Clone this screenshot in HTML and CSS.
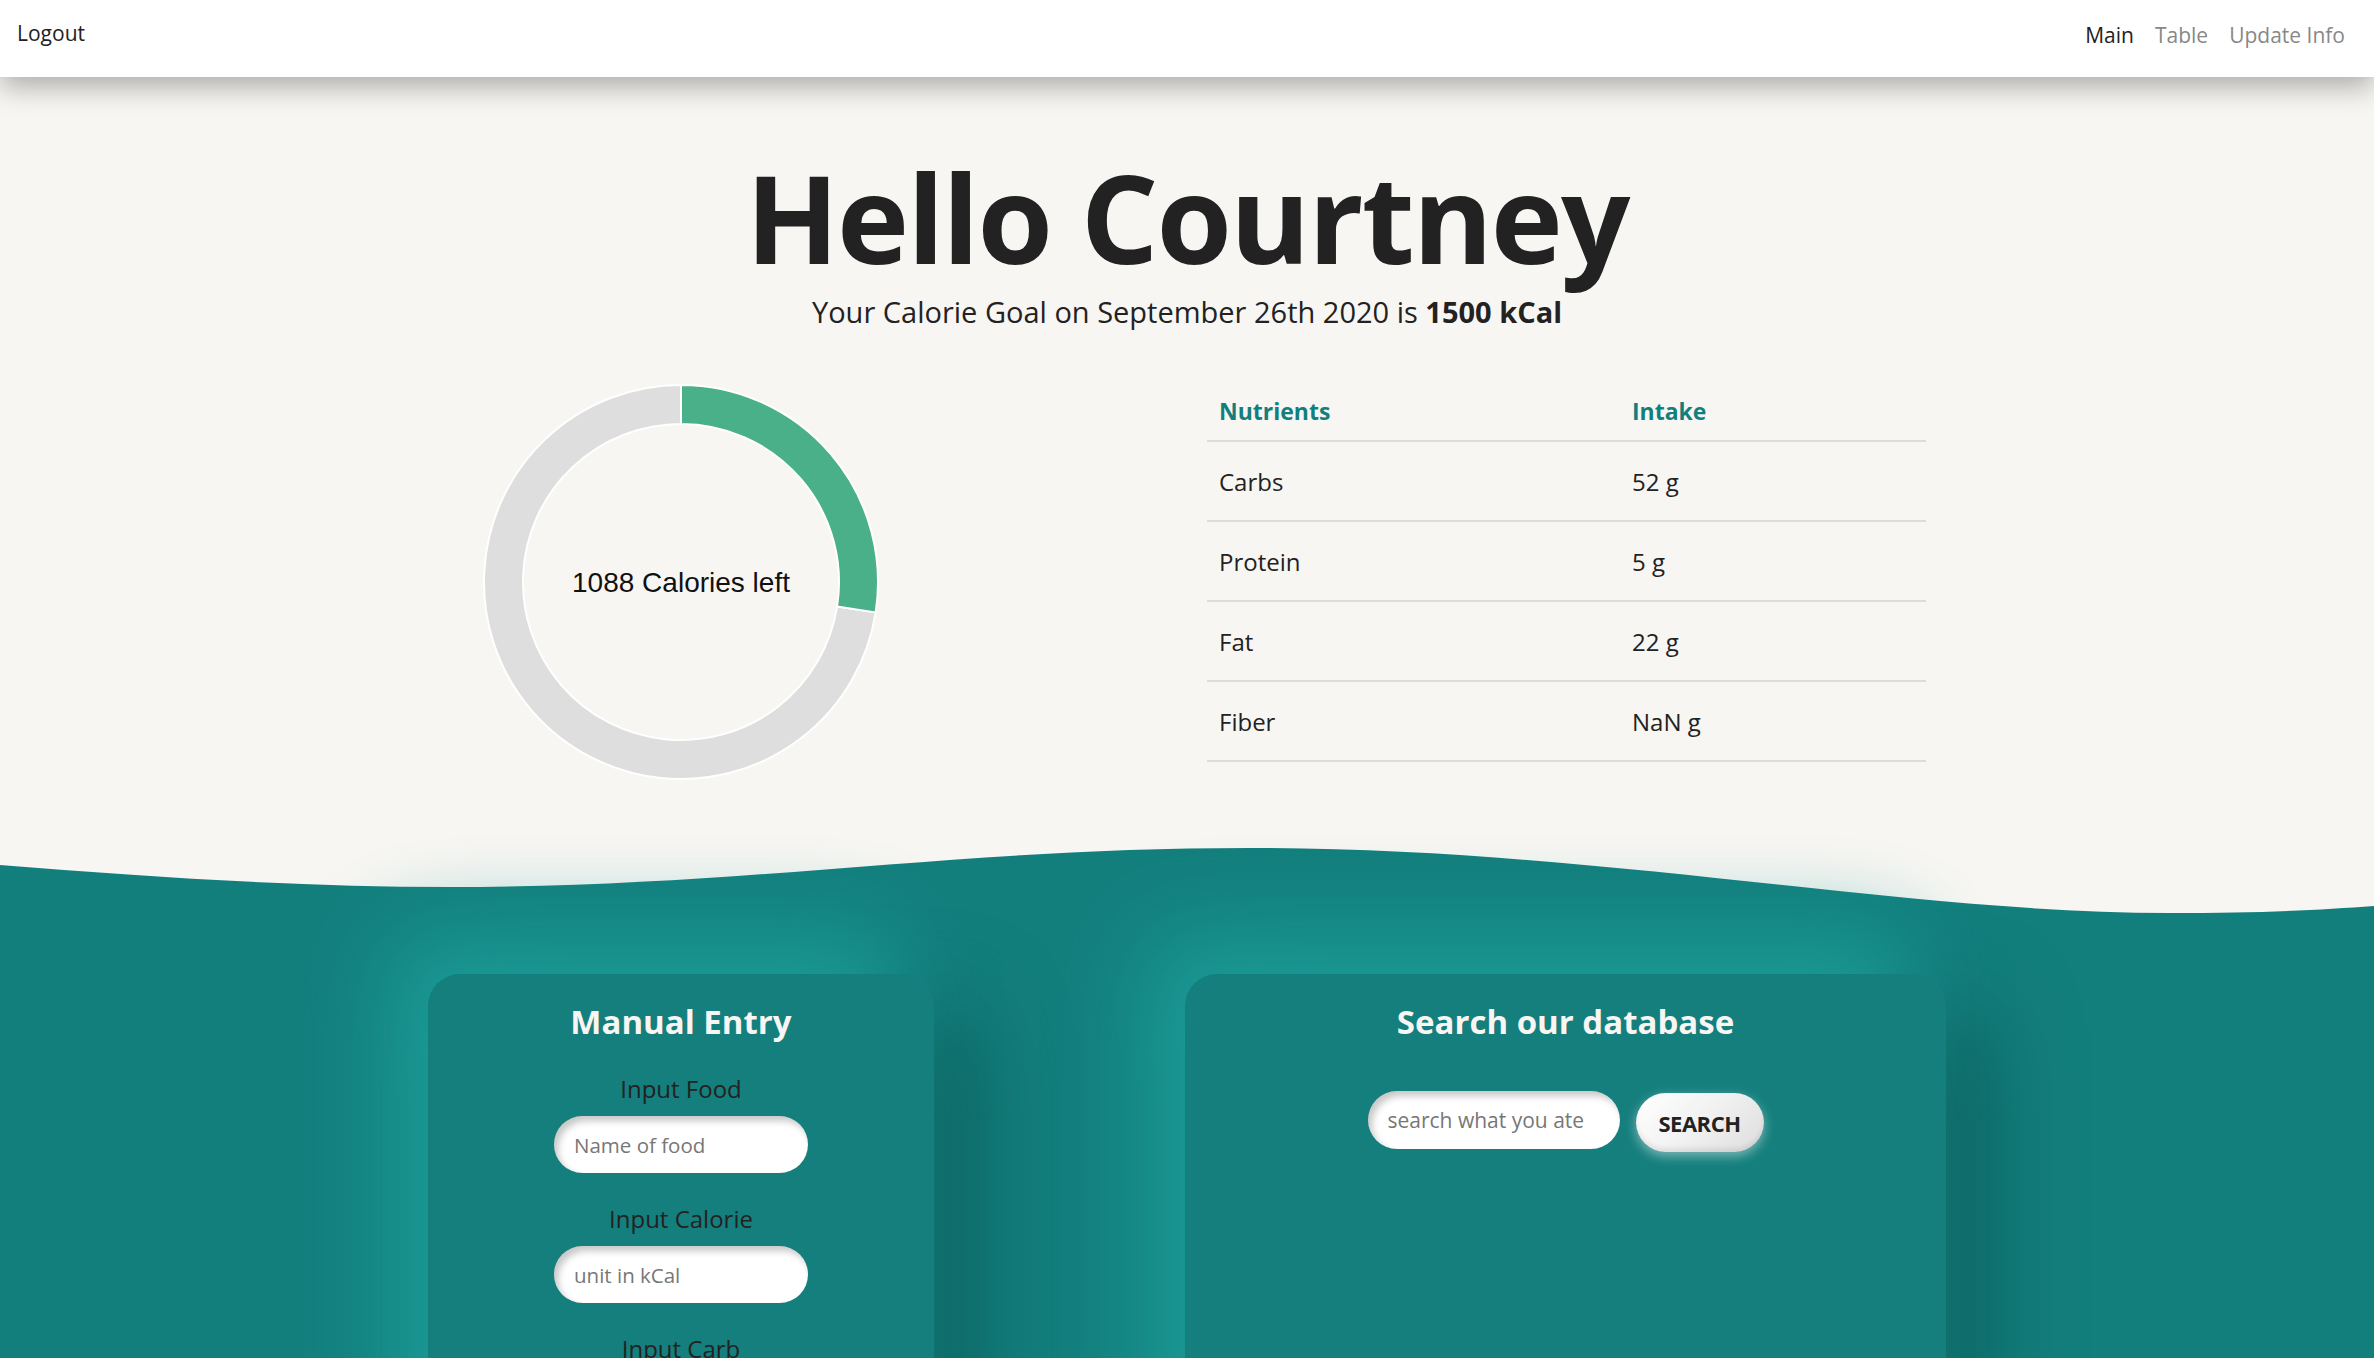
FILE: index.html
```html
<!DOCTYPE html>
<html lang="en">
<head>
<meta charset="utf-8">
<title>Calorie Tracker</title>
<link rel="stylesheet" href="styles.css">
</head>
<body>
<nav class="nav">
  <a class="nav-link nav-logout" href="#">Logout</a>
  <div class="nav-links">
    <a class="nav-link nav-active" href="#">Main</a>
    <a class="nav-link" href="#">Table</a>
    <a class="nav-link" href="#">Update Info</a>
  </div>
</nav>

<main class="hero">
  <h1 class="hero-title">Hello Courtney</h1>
  <p class="hero-goal">Your Calorie Goal on September 26th 2020 is <b>1500 kCal</b></p>

  <div class="grid stats">
    <div class="chart">
      <svg class="donut" viewBox="0 0 400 400" width="400" height="400">
        <path class="seg-rest" d="M394.64,230.41 A197,197 0 1 1 200,3 L200,42 A158,158 0 1 0 356.11,224.39 Z"/>
        <path class="seg-eaten" d="M200,3 A197,197 0 0 1 394.64,230.41 L356.11,224.39 A158,158 0 0 0 200,42 Z"/>
        <text class="donut-label" x="200" y="210" text-anchor="middle">1088 Calories left</text>
      </svg>
    </div>
    <div class="table-wrap">
      <table class="nutri">
        <thead>
          <tr><th class="col-name">Nutrients</th><th>Intake</th></tr>
        </thead>
        <tbody>
          <tr><td>Carbs</td><td>52 g</td></tr>
          <tr><td>Protein</td><td>5 g</td></tr>
          <tr><td>Fat</td><td>22 g</td></tr>
          <tr><td>Fiber</td><td>NaN g</td></tr>
        </tbody>
      </table>
    </div>
  </div>
</main>

<section class="lower">
  <svg class="wave" viewBox="0 0 2374 70" preserveAspectRatio="none">
    <path d="M0,20 C150,32 300,42 450,42 C750,42 950,3 1250,3 C1600,3 1900,68 2170,68 C2260,68 2320,65 2374,61 L2374,70 L0,70 Z"/>
  </svg>
  <div class="band">
    <div class="grid cards">
      <div class="card">
        <h2 class="card-title">Manual Entry</h2>
        <div class="field">
          <label class="field-label">Input Food</label>
          <input class="pill-input" type="text" placeholder="Name of food">
        </div>
        <div class="field">
          <label class="field-label">Input Calorie</label>
          <input class="pill-input" type="text" placeholder="unit in kCal">
        </div>
        <div class="field">
          <label class="field-label">Input Carb</label>
          <input class="pill-input" type="text" placeholder="unit in g">
        </div>
        <div class="field">
          <label class="field-label">Input Protein</label>
          <input class="pill-input" type="text" placeholder="unit in g">
        </div>
        <div class="field">
          <label class="field-label">Input Fat</label>
          <input class="pill-input" type="text" placeholder="unit in g">
        </div>
      </div>
      <div class="card">
        <h2 class="card-title">Search our database</h2>
        <div class="search-row">
          <input class="pill-input search-input" type="text" placeholder="search what you ate">
          <button class="search-btn" type="button">SEARCH</button>
        </div>
      </div>
    </div>
  </div>
</section>
</body>
</html>
```

FILE: styles.css
```css
html, body {
  margin: 0;
  padding: 0;
}
body {
  background: #f8f6f3;
  font-family: "Open Sans", "Noto Sans", sans-serif;
  color: #222;
}

/* NAV */
.nav {
  position: relative;
  z-index: 2;
  height: 77px;
  background: #fff;
  display: flex;
  align-items: center;
  justify-content: space-between;
  padding: 0 29px 0 17px;
  box-shadow: 0 10px 28px rgba(0, 0, 0, 0.3);
}
.nav-links {
  display: flex;
  gap: 21px;
}
.nav-link {
  font-size: 21px;
  color: #888;
  text-decoration: none;
  line-height: 1;
  margin-top: -6px;
}
.nav-logout, .nav-active {
  color: #222;
}
.nav-logout {
  margin-top: -10px;
}

/* HERO */
.hero {
  text-align: center;
}
.hero-title {
  margin: 79px 0 0;
  font-size: 122px;
  line-height: 1;
  font-weight: 700;
  letter-spacing: -2px;
  color: #222;
}
.hero-goal {
  margin: 16px 0 0;
  font-size: 29px;
  line-height: 36px;
  color: #222;
}
.hero-goal b {
  font-weight: 700;
}

.grid {
  width: 1518px;
  margin: 0 auto;
  display: grid;
  grid-template-columns: 506px 761px;
  column-gap: 251px;
}
.stats {
  margin-top: 52px;
  text-align: left;
}
.chart {
  display: flex;
  justify-content: center;
}
.donut {
  display: block;
}
.seg-rest {
  fill: #dedede;
  stroke: #fff;
  stroke-width: 2;
}
.seg-eaten {
  fill: #49b08a;
  stroke: #fff;
  stroke-width: 2;
}
.donut-label {
  font-family: "Liberation Sans", Arial, sans-serif;
  font-size: 28px;
  fill: #111;
}

.table-wrap {
  padding-left: 22px;
}
.nutri {
  width: 719px;
  border-collapse: separate;
  border-spacing: 0;
  font-size: 24px;
}
.nutri th, .nutri td {
  padding: 0 12px;
  text-align: left;
  border-bottom: 2px solid #dcdcdc;
}
.nutri th {
  height: 58px;
  font-size: 23px;
  color: #137f7d;
  font-weight: 700;
  vertical-align: middle;
}
.nutri td {
  height: 78px;
  color: #222;
}
.col-name {
  width: 389px;
}

/* LOWER */
.lower {
  margin-top: 63px;
}
.wave {
  display: block;
  width: 100%;
  height: 70px;
}
.wave path {
  fill: #137f7d;
}
.band {
  background: #137f7d;
  padding: 59px 0 80px;
}
.cards {
  position: relative;
  z-index: 1;
}
.card {
  background: #147f7d;
  border-radius: 32px;
  padding: 26px 0 60px;
  display: flex;
  flex-direction: column;
  align-items: center;
  box-shadow: -38px -38px 90px rgba(28, 158, 154, 0.95), 38px 38px 90px rgba(12, 92, 90, 0.9);
}
.card-title {
  margin: 0;
  font-size: 33px;
  line-height: 44px;
  font-weight: 700;
  color: #f8f5f2;
}
.field {
  display: flex;
  flex-direction: column;
  align-items: center;
  gap: 11px;
  margin-top: 29px;
}
.field + .field {
  margin-top: 30px;
}
.field-label {
  font-size: 24px;
  line-height: 32px;
  color: #222;
}
.pill-input {
  box-sizing: border-box;
  width: 254px;
  height: 57px;
  border: none;
  outline: none;
  border-radius: 30px;
  background: #fff;
  padding: 0 20px;
  font-family: "Open Sans", "Noto Sans", sans-serif;
  font-size: 20.5px;
  color: #222;
  box-shadow: inset 4px 5px 7px rgba(0, 0, 0, 0.22);
}
.pill-input::placeholder {
  color: #777;
}
.search-row {
  display: flex;
  align-items: center;
  gap: 16px;
  margin-top: 44px;
}
.search-input {
  width: 252px;
  height: 58px;
  font-size: 21px;
}
.search-btn {
  width: 128px;
  height: 59px;
  margin-top: 5px;
  border: none;
  border-radius: 30px;
  background: linear-gradient(135deg, #ffffff 0%, #f1f1f1 50%, #dddddd 100%);
  font-family: "Open Sans", "Noto Sans", sans-serif;
  font-size: 22px;
  font-weight: 700;
  color: #222;
  letter-spacing: -0.5px;
  box-shadow: 0 4px 12px rgba(255, 255, 255, 0.45), inset 0 -4px 4px rgba(0, 0, 0, 0.08);
}
```
